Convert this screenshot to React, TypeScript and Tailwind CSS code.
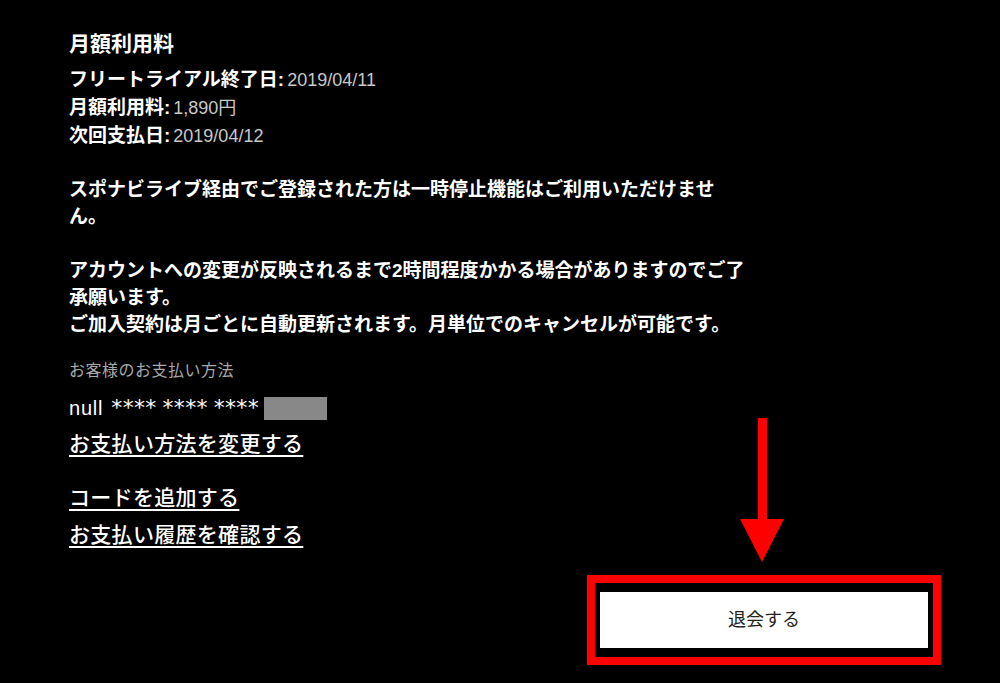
import React from "react";

const font = { fontFamily: '"Liberation Sans", "Noto Sans CJK JP", sans-serif' };
const star = { fontFamily: '"DejaVu Sans", sans-serif' };

export default function App() {
  return (
    <div
      className="relative w-[1000px] h-[683px] bg-black text-white overflow-hidden"
      style={font}
    >
      <div className="pl-[69px] pt-[30px]">
        <div className="text-[21px] leading-[28px] font-bold">月額利用料</div>
        <div className="mt-[8px] text-[19px] leading-[27px] font-bold">
          <div>
            フリートライアル終了日:
            <span className="ml-[3px] text-[18px] font-normal text-[#c8c8c8]">2019/04/11</span>
          </div>
          <div>
            月額利用料:
            <span className="ml-[3px] text-[18px] font-normal text-[#c8c8c8]">1,890円</span>
          </div>
          <div>
            次回支払日:
            <span className="ml-[3px] text-[18px] font-normal text-[#c8c8c8]">2019/04/12</span>
          </div>
        </div>

        <div className="mt-[26px] w-[683px] text-[19px] leading-[27px] font-bold">
          スポナビライブ経由でご登録された方は一時停止機能はご利用いただけません。
        </div>
        <div className="mt-[27px] w-[683px] text-[19px] leading-[27px] font-bold">
          <div>アカウントへの変更が反映されるまで2時間程度かかる場合がありますのでご了承願います。</div>
          <div>ご加入契約は月ごとに自動更新されます。月単位でのキャンセルが可能です。</div>
        </div>

        <div className="mt-[22px] text-[16px] leading-[22px] tracking-[0.5px] text-[#a8a8a8]">
          お客様のお支払い方法
        </div>
        <div className="mt-[12px] flex items-center h-[28px] text-[20px] leading-[28px]">
          <span className="tracking-[0.8px]">null</span>
          <span className="ml-[8px] text-[22px] tracking-[0.3px]" style={star}>****</span>
          <span className="ml-[6px] text-[22px] tracking-[0.3px]" style={star}>****</span>
          <span className="ml-[6px] text-[22px] tracking-[0.3px]" style={star}>****</span>
          <span className="ml-[5px] inline-block w-[63px] h-[23px] bg-[#888888]" />
        </div>

        <div className="mt-[8px] text-[21px] leading-[28px] tracking-[0.3px] font-medium">
          <a className="underline underline-offset-[4px] decoration-[2px]">お支払い方法を変更する</a>
        </div>
        <div className="mt-[26px] text-[21px] leading-[28px] tracking-[0.3px] font-medium">
          <a className="underline underline-offset-[4px] decoration-[2px]">コードを追加する</a>
        </div>
        <div className="mt-[9px] text-[21px] leading-[28px] tracking-[0.3px] font-medium">
          <a className="underline underline-offset-[4px] decoration-[2px]">お支払い履歴を確認する</a>
        </div>
      </div>

      <div className="mt-[26px] flex justify-end pr-[59px]">
        <div className="border-[8px] border-[#ff0000] px-[5px] py-[9px] w-[354px]">
          <button className="w-full h-[56px] bg-white text-[#222222] text-[18px] flex items-center justify-center">
            退会する
          </button>
        </div>
      </div>

      <svg
        className="absolute left-[735px] top-[415px]"
        width="55"
        height="152"
        viewBox="735 415 55 152"
      >
        <rect x="758" y="418" width="9" height="104" fill="#ff0000" />
        <polygon points="740,519 784,519 762,562" fill="#ff0000" />
      </svg>
    </div>
  );
}
